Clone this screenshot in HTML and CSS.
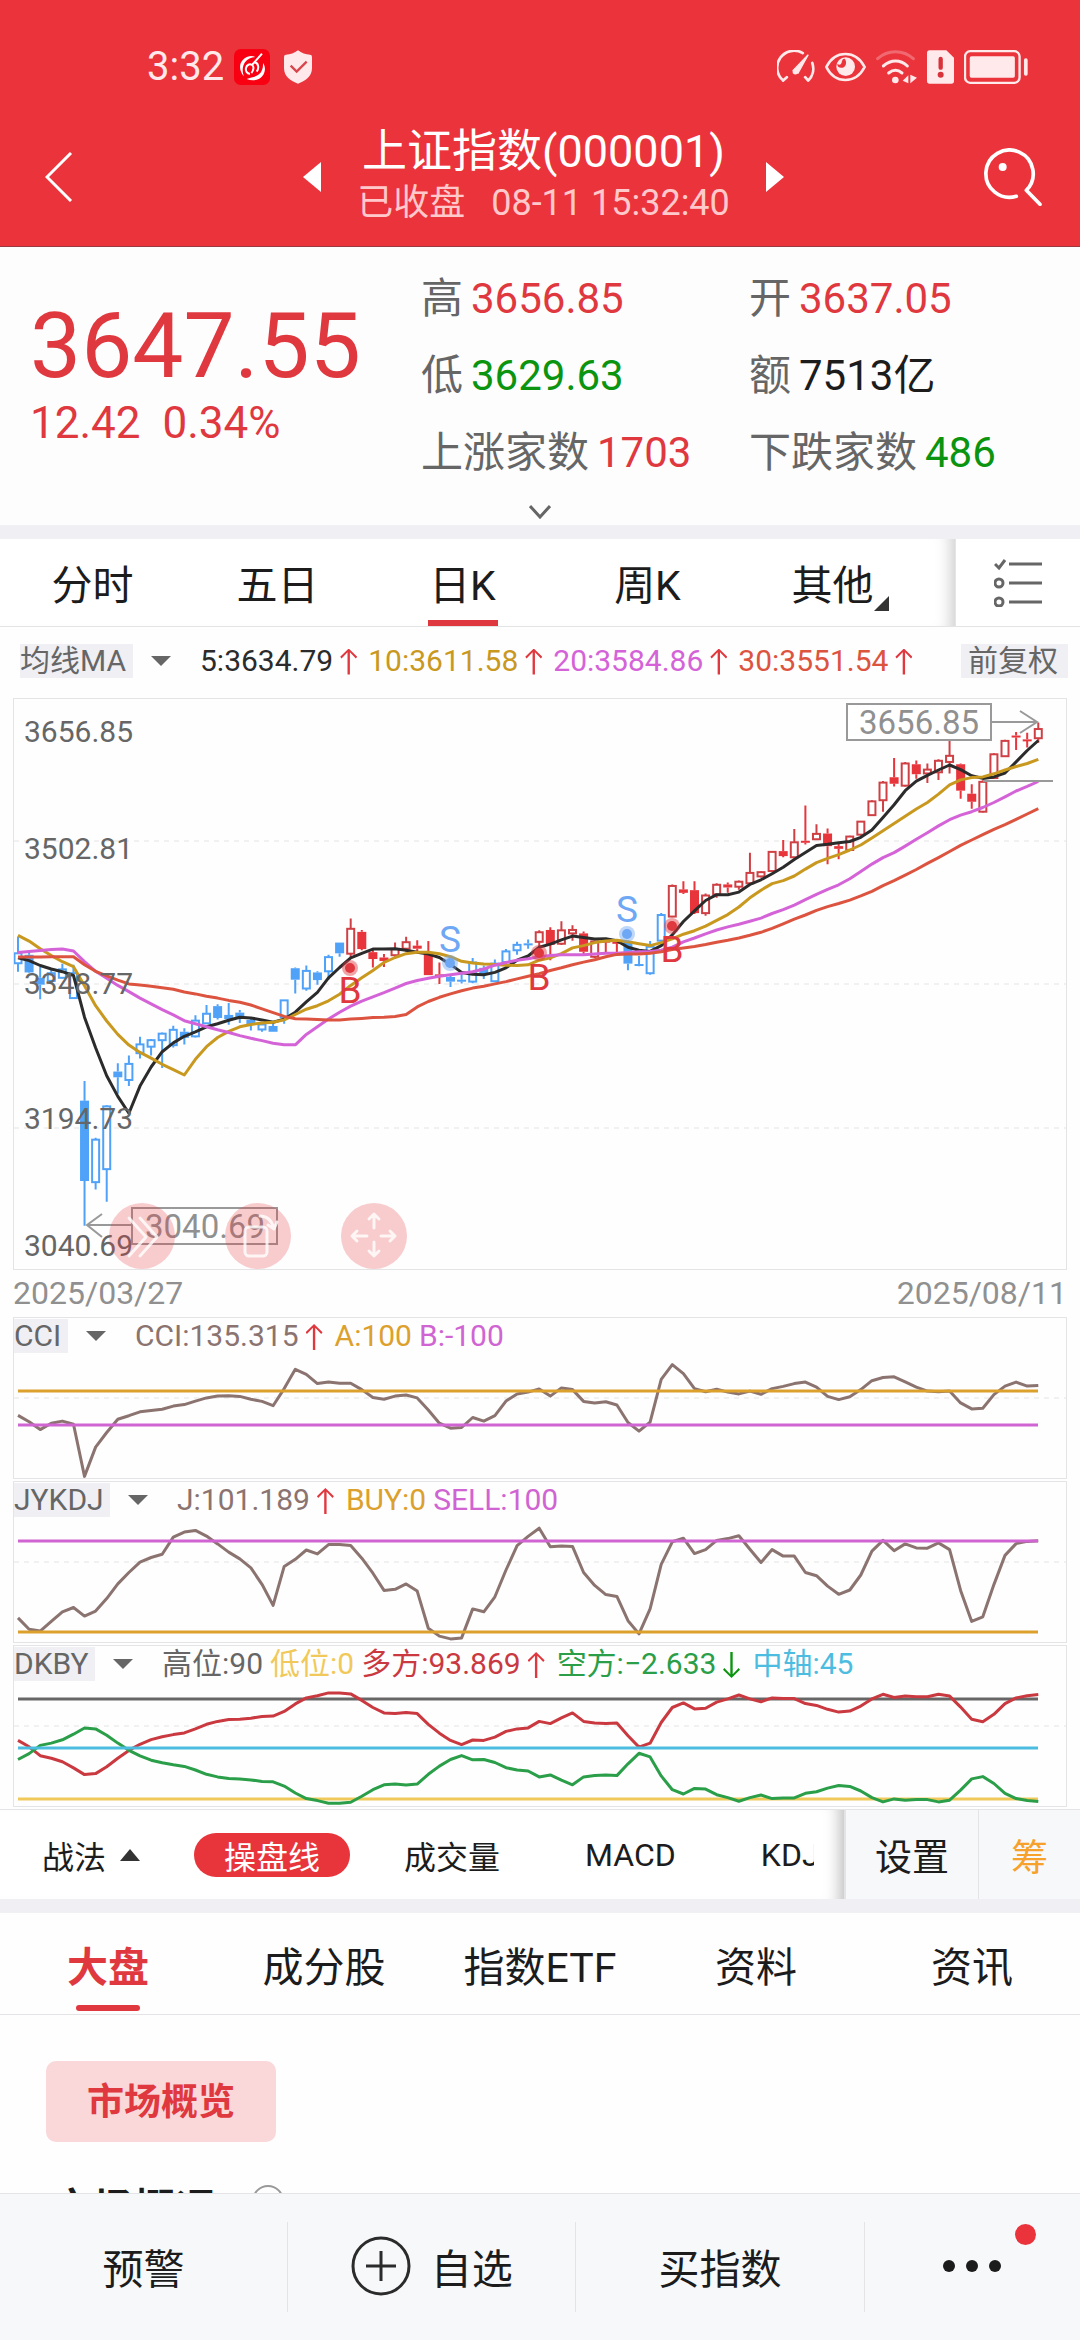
FILE: index.html
```html
<!DOCTYPE html>
<html lang="zh-Hans">
  <head>
    <meta charset="UTF-8" />
    <meta name="viewport" content="width=device-width, initial-scale=1.0" />
    <title>上证指数(000001)</title>
    <link rel="stylesheet" href="styles.css">
  </head>
  <body>
    <header class="header">
      <div class="status-bar">
        <span class="status-time">3:32</span>
        <svg class="status-app" width="36" height="36" viewBox="0 0 108 108">
          <rect width="108" height="108" rx="20" fill="#f80012" />
          <path d="M64 24C46 14 24 28 19 46c-3 14 3 28 11 36-6-14-5-30 3-42 8-11 18-15 31-16z" fill="#fff" />
          <path d="M38 90c18 8 40 4 50-13 7-13 6-26-1-35 1 14-3 26-12 34-10 9-24 8-37 14z" fill="#fff" />
          <path d="M84 14L54 48c-7-5-16 0-18 9-2 10 4 18 12 17M54 48c7 4 5 16-2 24M60 40c14 0 16 18 8 28" fill="none" stroke="#fff" stroke-width="6" />
        </svg>
        <svg width="28" height="34" viewBox="0 0 84 100">
          <path d="M42 0c10 8 24 13 36 13q6 0 6 7v34c0 24-20 38-42 46C20 92 0 78 0 54V20q0-7 6-7c12 0 26-5 36-13z" fill="#ffe9ea" />
          <path d="M20 46l18 18 30-30" fill="none" stroke="#d8464c" stroke-width="7" />
        </svg>
        <span class="status-space"></span>
        <svg width="38" height="34" viewBox="0 0 112 100" fill="none" stroke="#ffe9ea" stroke-width="8" stroke-linecap="round">
          <path d="M76 9A50 50 0 0 0 18 90M18 90l11-10M104 38A50 50 0 0 1 92 90M92 90L83 80" />
          <path d="M92 14L48 60l14 8z" fill="#ffe9ea" stroke-width="4" />
          <circle cx="54" cy="64" r="8" fill="#ffe9ea" stroke="none" />
        </svg>
        <svg width="41" height="30" viewBox="0 0 123 88" fill="none" stroke="#ffe9ea" stroke-width="8">
          <path d="M4 44C30-8 92-8 119 44 92 96 30 96 4 44z" />
          <circle cx="62" cy="43" r="28" fill="#ffe9ea" stroke="none" />
          <path d="M37 34c6 6 13 3 14-8q2-8 8-7c8 10 4 24-6 27-10 2-17-3-16-12z" fill="#eb333b" stroke="none" />
        </svg>
        <svg width="41" height="34" viewBox="0 0 123 102" fill="none" stroke="#ffe9ea" stroke-width="9" stroke-linecap="round">
          <path d="M5 26C35-2 82-2 112 26" opacity=".3" />
          <path d="M22 48C45 28 73 28 94 48M38 69c14-11 27-11 40 0" />
          <circle cx="58" cy="90" r="10" fill="#ffe9ea" stroke="none" />
          <path d="M97 76v24L80 92zM103 74v26l20-17z" fill="#ffe9ea" stroke="none" />
        </svg>
        <svg width="27" height="34" viewBox="0 0 81 100">
          <path d="M8 0h50l23 22v70q0 8-8 8H8q-8 0-8-8V8q0-8 8-8z" fill="#ffe9ea" />
          <path d="M41 26v26" stroke="#d8333a" stroke-width="13" stroke-linecap="round" />
          <circle cx="41" cy="73" r="9" fill="#d8333a" />
        </svg>
        <svg width="64" height="34" viewBox="0 0 190 100">
          <rect x="3" y="3" width="162" height="94" rx="16" fill="none" stroke="#ffe9ea" stroke-width="7" />
          <rect x="17" y="18" width="134" height="64" rx="5" fill="#ffe9ea" />
          <rect x="178" y="24" width="11" height="52" rx="5" fill="#ffe9ea" />
        </svg>
      </div>
      <div class="title-bar">
        <button class="icon-button" aria-label="返回">
          <svg width="28" height="50" viewBox="0 0 28 50"><path d="M26 1L2 25l24 24" fill="none" stroke="#fff" stroke-width="3" /></svg>
        </button>
        <div class="title-group">
          <button class="icon-button" aria-label="上一个">
            <svg width="18" height="30" viewBox="0 0 18 30"><path d="M18 0v30L0 15z" fill="#fff" /></svg>
          </button>
          <div class="title-text">
            <h1>上证指数(000001)</h1>
            <p><span>已收盘</span><span>08-11 15:32:40</span></p>
          </div>
          <button class="icon-button" aria-label="下一个">
            <svg width="18" height="30" viewBox="0 0 18 30"><path d="M0 0v30l18-15z" fill="#fff" /></svg>
          </button>
        </div>
        <button class="icon-button" aria-label="搜索">
          <svg width="58" height="58" viewBox="0 0 174 174" fill="none" stroke="#fff" stroke-width="11" stroke-linecap="round">
            <path d="M97 145A71 71 0 1 1 127 127l41 42" stroke-linejoin="round" />
            <circle cx="56" cy="57" r="12" fill="#fff" stroke="none" />
          </svg>
        </button>
      </div>
    </header>

    <main class="content">
      <section class="quote">
        <div class="quote-price up">
          <strong>3647.55</strong>
          <p><span>12.42</span><span>0.34%</span></p>
        </div>
        <dl class="quote-stats">
          <div><dt>高</dt><dd class="up">3656.85</dd></div>
          <div><dt>开</dt><dd class="up">3637.05</dd></div>
          <div><dt>低</dt><dd class="down">3629.63</dd></div>
          <div><dt>额</dt><dd>7513亿</dd></div>
          <div><dt>上涨家数</dt><dd class="up">1703</dd></div>
          <div><dt>下跌家数</dt><dd class="down">486</dd></div>
        </dl>
        <button class="quote-more" aria-label="展开">
          <svg width="22" height="14" viewBox="0 0 22 14"><path d="M1 1l10 11L21 1" fill="none" stroke="#666" stroke-width="3" /></svg>
        </button>
      </section>

      <nav class="period-bar">
        <div class="period-tabs">
          <button>分时</button>
          <button>五日</button>
          <button class="active">日K</button>
          <button>周K</button>
          <button class="has-corner">其他</button>
        </div>
        <button class="period-setting" aria-label="指标列表">
          <svg width="48" height="48" viewBox="0 0 48 48" fill="none" stroke="#666" stroke-width="3">
            <path d="M15 5h33M15 24h33M15 43h33M1 5l4 4 6-8" />
            <circle cx="5" cy="24" r="4" /><circle cx="5" cy="43" r="4" />
          </svg>
        </button>
      </nav>

      <div class="ma-row">
        <label class="picker">
          <select aria-label="主图指标"><option>均线MA</option></select>
          <i class="caret"></i>
        </label>
        <span class="ma5">5:3634.79<i class="arrow up"></i></span>
        <span class="ma10">10:3611.58<i class="arrow up"></i></span>
        <span class="ma20">20:3584.86<i class="arrow up"></i></span>
        <span class="ma30">30:3551.54<i class="arrow up"></i></span>
        <button class="tag">前复权</button>
      </div>

      <div class="chart">
        <svg id="kline" viewBox="0 0 1052 570">
          <g class="grid">
            <path d="M0 142H1052M0 285H1052M0 429H1052" />
          </g>
          <g id="candles"></g>
          <g id="averages"></g>
          <g id="signals"></g>
          <g class="axis">
            <text x="10" y="43">3656.85</text>
            <text x="10" y="160">3502.81</text>
            <text x="10" y="295">3348.77</text>
            <text x="10" y="430">3194.73</text>
            <text x="10" y="557">3040.69</text>
          </g>
          <g class="callout">
            <path d="M969 82H1039" />
            <rect x="833" y="5" width="144" height="36" fill="#fff" />
            <path d="M977 23H1023M1006 12L1023 23L1006 34" />
            <text x="905" y="35">3656.85</text>
            <rect x="118" y="509" width="145" height="36" />
            <path d="M118 526H73M88 515L73 526L88 538" />
            <text x="191" y="539">3040.69</text>
          </g>
        </svg>
        <div class="chart-tools">
          <button aria-label="展开更多">
            <svg viewBox="0 0 66 66"><path d="M20 15l17 19-17 19M31 15l17 19-17 19" /></svg>
          </button>
          <button aria-label="横屏">
            <svg viewBox="0 0 66 66"><rect x="20" y="24" width="22" height="29" rx="4" /><path d="M35 13q11 0 14 13M43 22l6 4 3-7" /></svg>
          </button>
          <button aria-label="移动">
            <svg viewBox="0 0 66 66"><path d="M33 25V11M28 16l5-5 5 5M33 39v14M28 48l5 5 5-5M26 33H11M16 28l-5 5 5 5M40 33h14M49 28l5 5-5 5" /></svg>
          </button>
        </div>
      </div>
      <div class="chart-dates"><time>2025/03/27</time><time>2025/08/11</time></div>

      <section class="indicator">
        <div class="indicator-head">
          <label class="picker">
            <select aria-label="副图一"><option>CCI</option></select>
            <i class="caret"></i>
          </label>
          <span class="brown">CCI:135.315<i class="arrow up"></i></span>
          <span class="gold">A:100</span>
          <span class="violet">B:-100</span>
        </div>
        <svg id="cci" viewBox="0 0 1052 124"></svg>
      </section>
      <section class="indicator">
        <div class="indicator-head">
          <label class="picker">
            <select aria-label="副图二"><option>JYKDJ</option></select>
            <i class="caret"></i>
          </label>
          <span class="brown">J:101.189<i class="arrow up"></i></span>
          <span class="gold">BUY:0</span>
          <span class="violet">SELL:100</span>
        </div>
        <svg id="jykdj" viewBox="0 0 1052 124"></svg>
      </section>
      <section class="indicator">
        <div class="indicator-head">
          <label class="picker">
            <select aria-label="副图三"><option>DKBY</option></select>
            <i class="caret"></i>
          </label>
          <span class="grey">高位:90</span>
          <span class="yellow">低位:0</span>
          <span class="red">多方:93.869<i class="arrow up"></i></span>
          <span class="green">空方:−2.633<i class="arrow down"></i></span>
          <span class="cyan">中轴:45</span>
        </div>
        <svg id="dkby" viewBox="0 0 1052 124"></svg>
      </section>

      <nav class="strategy-bar">
        <div class="strategy-list">
          <button>战法<i class="caret-up"></i></button>
          <button class="active">操盘线</button>
          <button>成交量</button>
          <button>MACD</button>
          <button>KDJ</button>
        </div>
        <button class="strategy-setting">设置</button>
        <button class="strategy-chip">筹</button>
      </nav>

      <nav class="info-tabs">
        <button class="active">大盘</button>
        <button>成分股</button>
        <button>指数ETF</button>
        <button>资料</button>
        <button>资讯</button>
      </nav>

      <section class="overview">
        <button class="overview-pill">市场概览</button>
        <h2>市场概况
          <svg width="32" height="32" viewBox="0 0 32 32"><circle cx="16" cy="16" r="15" fill="none" stroke="#999" stroke-width="2" /></svg>
        </h2>
      </section>
    </main>

    <footer class="bottom-bar">
      <button>预警</button>
      <button>
        <svg width="60" height="60" viewBox="0 0 60 60" fill="none" stroke="#2b2b2b" stroke-width="3">
          <circle cx="30" cy="30" r="28" /><path d="M30 15v30M15 30h30" />
        </svg>
        自选
      </button>
      <button>买指数</button>
      <button class="more" aria-label="更多">
        <svg width="60" height="14" viewBox="0 0 60 14" fill="#1c1c1c"><circle cx="7" cy="7" r="6" /><circle cx="30" cy="7" r="6" /><circle cx="53" cy="7" r="6" /></svg>
        <i class="badge"></i>
      </button>
    </footer>
    <script src="script.js"></script>
  </body>
</html>
```
FILE: styles.css
```css
* {
  box-sizing: border-box;
}

body {
  display: flex;
  flex-direction: column;
  height: 100vh;
  margin: 0;
  font-family: Roboto, "Noto Sans CJK SC", sans-serif;
  color: #1c1c1c;
  background-color: #fefefe;
}

button {
  margin: 0;
  padding: 0;
  border: none;
  background: none;
  font: inherit;
  color: inherit;
  cursor: pointer;
}

svg {
  display: block;
  flex-shrink: 0;
}

h1, h2, p, dl, dd {
  margin: 0;
}

.up {
  color: #e0383f;
}

.down {
  color: #0b940f;
}

/* header */

.header {
  flex-shrink: 0;
  background-color: #eb333b;
  border-bottom: 1px solid #9b3a40;
  color: #fff;
}

.status-bar {
  display: flex;
  align-items: center;
  gap: 10px;
  height: 90px;
  padding: 44px 52px 0 147px;
}

.status-time {
  font-size: 40px;
  line-height: 44px;
  color: #ffe9ea;
}

.status-app {
  margin-right: 4px;
}

.status-space {
  flex-grow: 1;
}

.title-bar {
  display: grid;
  grid-template-columns: 1fr auto 1fr;
  align-items: center;
  height: 156px;
  padding: 18px 38px 0 45px;
}

.title-bar > :last-child {
  justify-self: end;
}

.title-group {
  display: flex;
  align-items: center;
  gap: 36px;
}

.title-text {
  text-align: center;
}

.title-text h1 {
  font-size: 45px;
  line-height: 52px;
  font-weight: 400;
}

.title-text p {
  display: flex;
  justify-content: center;
  gap: 26px;
  font-size: 36px;
  line-height: 50px;
  color: #ffc9cc;
}

/* main */

.content {
  flex: 1;
  min-height: 0;
  overflow-y: auto;
  scrollbar-width: none;
}

.quote {
  display: grid;
  grid-template-columns: 391fr 629fr;
  padding: 13px 30px 0;
  background-color: #fdfdfd;
}

.quote-price {
  padding-top: 31px;
}

.quote-price strong {
  display: block;
  font-size: 91px;
  line-height: 110px;
  font-weight: 400;
}

.quote-price p {
  display: flex;
  gap: 22px;
  font-size: 44px;
  line-height: 44px;
}

.quote-stats {
  display: grid;
  grid-template-columns: 328fr 301fr;
}

.quote-stats div {
  display: flex;
  gap: 8px;
  font-size: 42px;
  line-height: 77px;
  white-space: nowrap;
}

.quote-stats dt {
  color: #666;
}

.quote-more {
  grid-column: 1 / 3;
  display: flex;
  justify-content: center;
  align-items: center;
  height: 34px;
  padding-top: 8px;
}

.period-bar {
  display: flex;
  height: 102px;
  border-top: 14px solid #efeff4;
  border-bottom: 1px solid #e4e4e6;
  background-color: #fff;
}

.period-tabs {
  flex: 1;
  display: flex;
  padding-right: 30px;
  box-shadow: inset -18px 0 16px -14px #ccc;
}

.period-tabs button {
  position: relative;
  flex: 1;
  padding-bottom: 2px;
  font-size: 41px;
}

.period-tabs .active::after {
  content: "";
  position: absolute;
  left: 50%;
  bottom: 0;
  width: 70px;
  height: 6px;
  margin-left: -35px;
  background-color: #e0383f;
}

.has-corner::after {
  content: "";
  position: absolute;
  right: 36px;
  bottom: 15px;
  border-bottom: 15px solid #333;
  border-left: 15px solid transparent;
}

.period-setting {
  display: flex;
  justify-content: center;
  align-items: center;
  width: 125px;
  border-left: 1px solid #e4e4e6;
}

.ma-row, .indicator-head {
  display: flex;
  align-items: center;
  gap: 7px;
  font-size: 30px;
  line-height: 34px;
  white-space: nowrap;
}

.ma-row {
  height: 71px;
  padding: 0 12px 4px 20px;
  gap: 11px;
}

.picker {
  display: flex;
  align-items: center;
  gap: 18px;
}

.picker select {
  appearance: none;
  height: 34px;
  margin: 0;
  padding: 0 6px 0 0;
  border: none;
  border-radius: 0;
  background-color: #efeff4;
  color: #666;
  font: inherit;
}

.caret {
  border-top: 10px solid #666;
  border-left: 10px solid transparent;
  border-right: 10px solid transparent;
}

.ma-row .picker {
  margin-right: 18px;
}

.arrow {
  display: inline-block;
  width: 17px;
  height: 26px;
  margin-left: 7px;
  vertical-align: -4px;
  background-color: currentColor;
  clip-path: polygon(50% 0, 100% 32%, 92% 38%, 57% 14%, 57% 100%, 43% 100%, 43% 14%, 8% 38%, 0 32%);
}

.arrow.down {
  transform: rotate(180deg);
}

.ma5 {
  color: #2b2b2b;
}

.ma10 {
  color: #c9981f;
}

.ma20 {
  color: #d563d8;
}

.ma30 {
  color: #dc5440;
}

.tag {
  height: 34px;
  margin-left: auto;
  padding: 0 10px 0 7px;
  background-color: #efeff4;
  color: #666;
}

/* charts */

.chart {
  position: relative;
  margin: 0 13px;
  border: 1px solid #e4e4e6;
}

.chart svg, .indicator svg {
  width: 100%;
  height: auto;
}

.grid {
  fill: none;
  stroke: #e4e4e6;
  stroke-width: 1;
  stroke-dasharray: 5 5;
}

.line {
  fill: none;
  stroke-width: 3;
  stroke-linejoin: round;
}

.axis text {
  font-size: 30px;
  fill: #666;
}

.callout {
  fill: none;
  stroke: #999;
  stroke-width: 2;
}

.callout text {
  font-size: 33px;
  fill: #909090;
  stroke: none;
  text-anchor: middle;
}

.signal {
  font-size: 37px;
  text-anchor: middle;
}

.chart-tools {
  position: absolute;
  left: 95px;
  bottom: 0;
  display: flex;
  gap: 50px;
}

.chart-tools button {
  width: 66px;
  height: 66px;
  border-radius: 50%;
  background-color: rgba(232, 52, 59, 0.25);
}

.chart-tools svg {
  fill: none;
  stroke: rgba(255, 255, 255, 0.8);
  stroke-width: 3;
  stroke-linecap: round;
  stroke-linejoin: round;
}

.chart-dates {
  display: flex;
  justify-content: space-between;
  padding: 0 13px;
  font-size: 32px;
  line-height: 47px;
  color: #909090;
}

.indicator {
  margin: 0 13px 2px;
  border: 1px solid #e4e4e6;
}

.indicator-head {
  height: 36px;
}

.indicator-head .picker {
  margin-right: 22px;
}

.indicator-head .arrow {
  margin-right: 5px;
}

.brown {
  color: #8b7370;
}

.gold {
  color: #dca02d;
}

.violet {
  color: #d064d2;
}

.grey {
  color: #666;
}

.yellow {
  color: #f0c95a;
}

.red {
  color: #c9393f;
}

.green {
  color: #2a9e48;
}

.cyan {
  color: #4cbde0;
}

/* strategy bar */

.strategy-bar {
  display: flex;
  height: 90px;
  border-top: 1px solid #e4e4e6;
  background-color: #fff;
}

.strategy-list {
  flex: 1;
  min-width: 0;
  display: flex;
  align-items: center;
  padding-left: 42px;
  padding-right: 30px;
  font-size: 32px;
  white-space: nowrap;
  box-shadow: inset -18px 0 16px -14px #bbb;
}

.strategy-list button {
  display: flex;
  align-items: center;
  margin-right: 85px;
}

.strategy-list button:first-child, .strategy-list .active {
  margin-right: 54px;
}

.strategy-list .active {
  height: 44px;
  padding: 0 30px;
  border-radius: 22px;
  background-color: #e8343b;
  color: #fff;
}

.strategy-list button:last-child {
  flex: 1;
  min-width: 0;
  margin-right: 0;
  overflow: hidden;
}

.caret-up {
  margin-left: 14px;
  border-bottom: 12px solid #333;
  border-left: 10px solid transparent;
  border-right: 10px solid transparent;
}

.strategy-setting, .strategy-chip {
  background-color: #f7f8fa;
  font-size: 37px;
}

.strategy-setting {
  width: 134px;
  border-left: 2px solid #e4e4e6;
}

.strategy-chip {
  width: 102px;
  border-left: 1px solid #e4e4e6;
  color: #f5a12b;
}

.info-tabs {
  display: grid;
  grid-template-columns: repeat(5, 1fr);
  height: 116px;
  border-top: 14px solid #efeff4;
  border-bottom: 1px solid #e4e4e6;
  font-size: 41px;
}

.info-tabs button {
  position: relative;
}

.info-tabs .active {
  font-weight: 700;
  color: #e0383f;
}

.info-tabs .active::after {
  content: "";
  position: absolute;
  left: 50%;
  bottom: 3px;
  width: 64px;
  height: 6px;
  margin-left: -32px;
  border-radius: 3px;
  background-color: #e0383f;
}

.overview {
  padding: 46px 46px 0;
}

.overview-pill {
  display: block;
  height: 81px;
  padding: 0 41px 6px;
  border-radius: 10px;
  background-color: #fad7d9;
  color: #e0383f;
  font-size: 37px;
  font-weight: 700;
}

.overview h2 {
  display: flex;
  align-items: flex-start;
  gap: 36px;
  margin-top: 43px;
  padding-left: 6px;
  font-size: 41px;
  line-height: 48px;
}

/* bottom bar */

.bottom-bar {
  flex-shrink: 0;
  display: flex;
  padding: 28px 0;
  border-top: 1px solid #e4e4e6;
  background-color: #f7f8fa;
}

.bottom-bar button {
  position: relative;
  flex: 4 1 0;
  display: flex;
  justify-content: center;
  align-items: center;
  gap: 20px;
  height: 90px;
  padding-bottom: 2px;
  border-left: 1px solid #e4e4e6;
  font-size: 41px;
}

.bottom-bar button:first-child {
  border-left: none;
}

.bottom-bar .more {
  flex-grow: 3;
}

.badge {
  position: absolute;
  top: 2px;
  right: 44px;
  width: 21px;
  height: 21px;
  border-radius: 50%;
  background-color: #eb333b;
}
```
FILE: script.js
```js
const LEFT = 4;
const STEP = 11.09;

// rows: high, body top, body bottom, low, filled (1) or hollow (0)
const candles = [
  [645,688,714,736,0],[685,692,738,740,1],[723,752,770,808,1],[728,740,760,765,0],[715,730,752,754,0],
  [718,740,805,806,0],[1022,1073,1283,1400,1],[1170,1175,1286,1305,0],[1085,1088,1252,1337,0],[975,997,1012,1055,1],
  [955,977,1019,1035,0],[906,926,949,963,0],[912,915,932,955,0],[895,898,915,988,0],[877,888,928,934,0],
  [884,893,909,926,1],[850,864,905,908,0],[823,846,871,873,0],[821,826,857,861,1],[818,849,860,875,1],
  [836,843,855,870,1],[855,862,873,890,1],[870,874,887,893,0],[870,878,893,893,1],[810,811,855,872,0],
  [725,727,757,793,1],[720,734,780,786,0],[735,738,758,770,1],[692,698,735,757,0],[660,660,688,697,1],
  [597,624,689,698,0],[627,632,677,680,1],[675,685,703,725,1],[690,699,708,724,1],[660,677,693,697,0],
  [645,659,676,684,0],[654,668,676,682,1],[656,690,745,745,1],[712,743,747,768,1],[742,750,762,776,1],
  [735,757,762,767,1],[700,712,762,766,0],[720,726,742,755,1],[704,715,761,762,0],[677,683,711,725,0],
  [658,666,680,692,0],[652,662,666,676,1],[628,633,658,680,0],[620,627,666,706,1],[604,628,663,666,0],
  [615,627,636,655,0],[631,636,684,690,1],[655,657,697,700,0],[650,655,659,685,1],[655,658,662,692,1],
  [655,658,715,732,1],[695,716,720,722,1],[656,671,740,744,0],[583,588,655,670,0],[508,512,592,594,0],
  [500,521,530,533,1],[500,523,583,585,1],[532,537,583,590,0],[505,509,534,543,0],[503,508,516,530,1],
  [498,501,514,522,0],[425,478,505,508,0],[474,476,487,490,0],[421,423,473,476,0],[392,421,434,437,1],
  [363,398,437,440,0],[302,394,399,404,1],[351,376,390,392,0],[362,375,408,455,1],[398,408,415,442,1],
  [381,383,418,420,0],[342,344,378,380,0],[288,291,327,328,0],[238,242,288,318,0],[178,228,245,252,1],
  [188,192,250,252,0],[184,194,220,232,1],[192,208,218,243,0],[181,185,215,235,0],[128,172,188,218,0],
  [192,194,263,284,1],[246,271,292,310,1],[236,240,318,320,0],[165,168,230,232,0],[130,133,173,174,0],
  [110,119,124,157,1],[112,129,133,150,1],[85,102,126,138,0],
];

const averages = {
  "#2b2b2b": [700,707,720,729,736,746,855,935,1008,1062,1106,1035,985,945,922,905,893,880,872,863,855,857,862,868,860,842,815,790,752,725,700,688,677,677,676,680,685,690,699,717,738,743,744,738,726,706,695,672,664,653,643,647,651,650,655,672,680,683,668,640,605,577,550,535,535,528,508,496,480,463,443,425,406,403,399,396,385,366,333,300,263,238,223,209,196,208,224,231,227,217,188,158,132],
  "#c9981f": [641,656,676,694,710,723,773,825,865,900,928,947,962,978,992,1006,965,932,908,892,880,874,870,868,862,848,834,825,812,795,772,752,733,712,699,689,685,685,689,697,709,713,716,717,719,720,718,706,700,689,674,668,660,656,654,658,663,668,660,650,638,629,617,602,587,567,543,523,506,498,486,468,451,440,430,418,405,387,368,349,330,311,294,272,248,235,229,227,219,209,200,192,181],
  "#d563d8": [686,683,681,678,677,682,710,735,753,772,788,805,820,835,849,864,872,880,888,895,903,910,916,923,927,927,900,880,860,842,826,813,802,791,779,767,759,753,748,744,740,736,729,719,712,706,702,697,694,692,692,692,690,688,688,686,684,683,680,672,658,648,637,627,619,612,604,596,584,574,562,548,534,521,509,493,474,455,438,425,408,390,373,355,339,327,318,307,294,279,264,252,239],
  "#dc5440": [698,698,698,697,697,697,718,735,747,758,768,771,774,778,782,789,794,800,805,811,816,823,833,843,853,859,860,861,862,862,860,858,856,855,853,848,828,814,803,794,786,779,774,768,762,755,748,741,733,726,718,711,705,697,691,690,690,688,684,678,674,670,665,659,654,648,641,633,623,611,599,588,576,566,558,549,538,526,511,498,484,469,453,438,422,406,392,378,364,352,338,324,310],
};

const cci = [435,453,475,457,451,460,606,524,483,446,436,425,421,418,409,405,395,386,381,380,382,390,396,408,360,306,320,346,342,345,345,363,385,390,381,378,386,420,457,471,469,441,451,436,395,375,370,361,381,358,363,396,400,397,406,455,479,454,334,293,318,360,369,362,370,375,367,376,360,354,346,342,356,382,391,383,363,338,329,327,341,356,367,369,367,400,417,415,377,353,342,353,351];

const jykdj = [1002,1034,1039,1012,985,973,997,983,948,907,875,846,833,824,776,762,757,773,795,818,837,862,908,967,858,838,812,823,797,797,799,835,877,925,922,907,927,1031,1053,1061,1058,977,985,943,868,800,774,751,803,801,802,875,911,937,942,1010,1047,977,852,789,779,822,811,785,780,772,810,847,811,829,829,875,884,913,936,924,882,815,785,814,795,806,807,792,811,925,1012,999,909,827,794,788,786];

const bulls = [1345,1363,1388,1395,1405,1422,1441,1438,1419,1395,1373,1356,1343,1335,1329,1324,1313,1300,1292,1287,1286,1283,1278,1277,1264,1243,1226,1220,1212,1212,1215,1233,1253,1268,1270,1267,1270,1300,1325,1345,1357,1344,1345,1336,1320,1313,1310,1292,1298,1282,1268,1292,1296,1298,1296,1332,1364,1353,1295,1253,1240,1257,1255,1238,1229,1218,1229,1237,1226,1228,1228,1242,1247,1258,1266,1263,1249,1229,1216,1225,1221,1223,1223,1216,1221,1252,1286,1293,1272,1242,1226,1220,1217];
const bears = bulls.map((v) => 2636 - 0.92 * v);

// type, x, text baseline, dot center
const signals = [
  ["B", 336, 304, 269],
  ["S", 436, 253, 264],
  ["B", 525, 291, 254],
  ["S", 613, 223, 235],
  ["B", 658, 263, 227],
];

function xAt(i) {
  return LEFT + STEP * i;
}

function priceY(v) {
  return v / 2.613 - 9;
}

function polyline(values, color, toY) {
  const points = values
    .map((v, i) => `${xAt(i).toFixed(1)},${toY(v).toFixed(1)}`)
    .join(" ");
  return `<polyline class="line" points="${points}" stroke="${color}" />`;
}

function level(y, color) {
  return `<path class="line" d="M${LEFT} ${y}H1024" stroke="${color}" />`;
}

function isBlue(i) {
  return i < 30 || (i > 38 && i < 47) || (i > 54 && i < 59);
}

function drawCandles() {
  document.getElementById("candles").innerHTML = candles
    .map(([high, top, bottom, low, filled], i) => {
      const color = isBlue(i) ? "#4fa2f8" : filled ? "#e8343b" : "#cf4045";
      const x = xAt(i);
      const [h, t, b, l] = [high, top, bottom, low].map(priceY);
      const inset = filled ? 0 : 1;
      const height = Math.max(b - t, 2);
      return `<path d="M${x} ${h}V${t}M${x} ${b}V${l}" stroke="${color}" stroke-width="2" />
        <rect x="${x - 4.5 + inset}" y="${t}" width="${9 - inset * 2}" height="${height}"
          fill="${filled ? color : "#fff"}" stroke="${filled ? "none" : color}" stroke-width="2" />`;
    })
    .join("");
}

function drawSignals() {
  document.getElementById("signals").innerHTML = signals
    .map(([type, x, textY, dotY]) => {
      const color = type === "B" ? "#e0383f" : "#6ea7f3";
      return `<circle cx="${x}" cy="${dotY}" r="8" fill="${color}" opacity=".45" />
        <circle cx="${x}" cy="${dotY}" r="5" fill="${color}" />
        <text class="signal" x="${x}" y="${textY}" fill="${color}">${type}</text>`;
    })
    .join("");
}

function drawIndicator(id, parts) {
  document.getElementById(id).innerHTML =
    '<path class="grid" d="M0 44H1052" />' + parts.join("");
}

drawCandles();
document.getElementById("averages").innerHTML = Object.entries(averages)
  .map(([color, values]) => polyline(values, color, priceY))
  .join("");
drawSignals();

drawIndicator("cci", [
  polyline(cci, "#8b7370", (v) => v / 2.8 - 94),
  level(37, "#dca02d"),
  level(71, "#d064d2"),
]);
drawIndicator("jykdj", [
  polyline(jykdj, "#8b7370", (v) => v / 2.8 - 258),
  level(23, "#d064d2"),
  level(114, "#dca02d"),
]);
drawIndicator("dkby", [
  level(17, "#666"),
  level(117, "#f0c95a"),
  polyline(bulls, "#c9393f", (v) => v / 2.8 - 422),
  polyline(bears, "#2a9e48", (v) => v / 2.8 - 422),
  level(66, "#4cbde0"),
]);
```
